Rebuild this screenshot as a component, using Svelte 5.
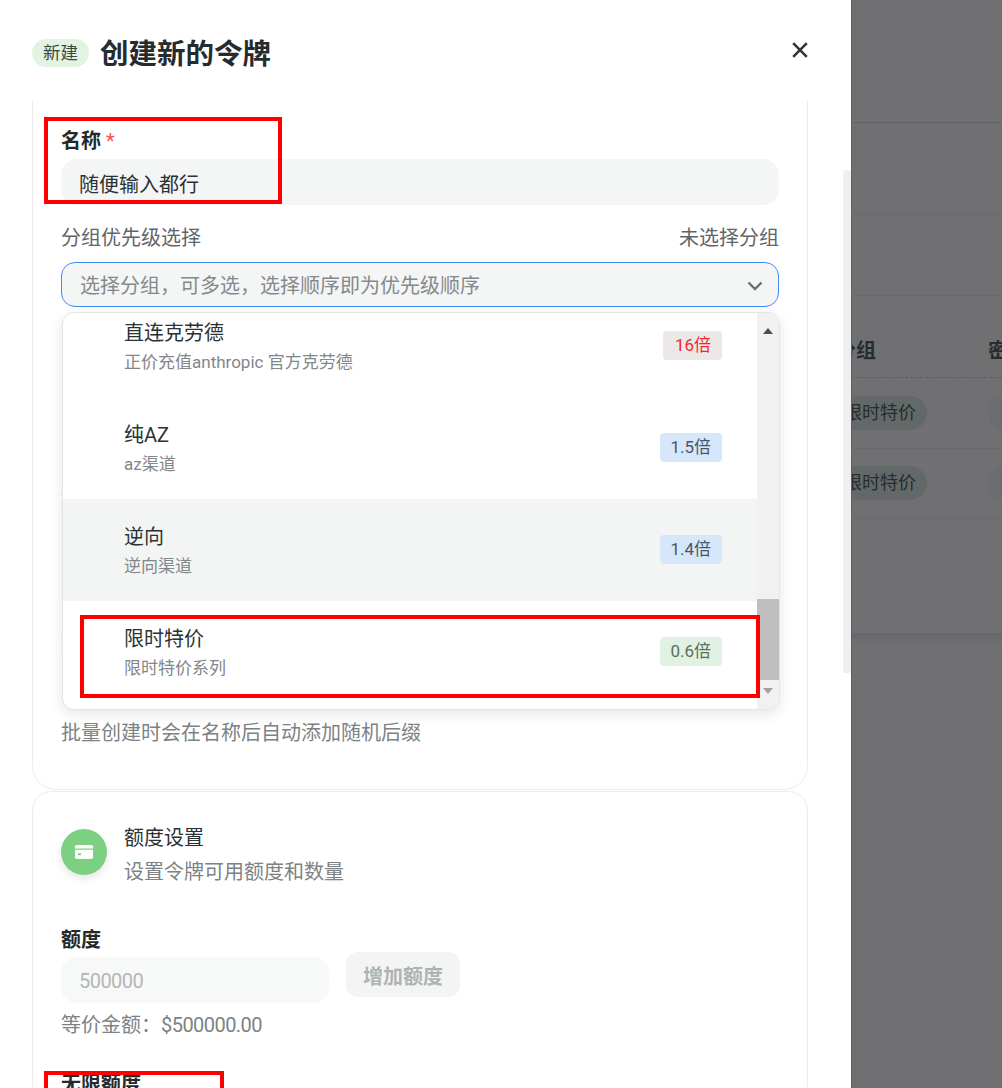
<script>
  const options = [
    { name: "直连克劳德", desc: "正价充值anthropic 官方克劳德", rate: "16倍", tone: "red" },
    { name: "纯AZ", desc: "az渠道", rate: "1.5倍", tone: "blue" },
    { name: "逆向", desc: "逆向渠道", rate: "1.4倍", tone: "blue", hover: true },
    { name: "限时特价", desc: "限时特价系列", rate: "0.6倍", tone: "green" },
  ];
</script>

<div class="page">
  <div class="bg-line first"></div>
  <div class="bg-line dotted tall"></div>
  <div class="bg-line dotted mid"></div>
  <div class="bg-head">
    <span>分组</span>
    <span>密钥</span>
  </div>
  {#each [0, 1] as row (row)}
    <div class="bg-row">
      <span class="chip">限时特价</span>
      <span class="chip ghost"></span>
    </div>
  {/each}
  <div class="bg-empty"></div>
  <div class="bg-band"></div>
</div>

<aside class="drawer">
  <header class="drawer-head">
    <span class="tag">新建</span>
    <h1>创建新的令牌</h1>
    <button class="close" aria-label="关闭">
      <svg viewBox="0 0 16 16" width="16" height="16">
        <path d="M1.2 1.2 14.8 14.8M14.8 1.2 1.2 14.8" stroke="#2f3638" stroke-width="2.6" fill="none" />
      </svg>
    </button>
  </header>

  <div class="scroll-thumb"></div>

  <div class="drawer-body">
    <section class="card top">
      <div class="label">名称 <em>*</em></div>
      <div class="input name">随便输入都行</div>

      <div class="label-row">
        <span>分组优先级选择</span>
        <span>未选择分组</span>
      </div>
      <div class="input select">
        <span>选择分组，可多选，选择顺序即为优先级顺序</span>
        <svg viewBox="0 0 16 10" width="16" height="10">
          <path d="M1.5 1.5 8 8l6.5-6.5" stroke="#6b7072" stroke-width="2.4" fill="none" />
        </svg>
      </div>

      <div class="under">
        <div class="under-label one">过期时间</div>
        <div class="under-label two">数量</div>
      </div>
      <p class="hint">批量创建时会在名称后自动添加随机后缀</p>

      <div class="dropdown">
        <div class="opt-list">
          {#each options as o (o.name)}
            <div class="opt" class:hover={o.hover}>
              <div class="opt-text">
                <div class="opt-name">{o.name}</div>
                <div class="opt-desc">{o.desc}</div>
              </div>
              <span class="rate {o.tone}">{o.rate}</span>
            </div>
          {/each}
        </div>
        <div class="bar">
          <svg class="arrow" viewBox="0 0 10 6" width="10" height="6"><path d="M5 0 10 6H0z" fill="#4b4f51" /></svg>
          <div class="thumb"></div>
          <svg class="arrow" viewBox="0 0 10 6" width="10" height="6"><path d="M0 0H10L5 6z" fill="#a3a3a3" /></svg>
        </div>
      </div>
    </section>

    <section class="card">
      <div class="card-head">
        <div class="icon">
          <svg viewBox="0 0 18 14" width="18" height="14">
            <path d="M2 0h14a2 2 0 0 1 2 2v1.4H0V2a2 2 0 0 1 2-2z" fill="#fff" />
            <path d="M0 4.8h18V12a2 2 0 0 1-2 2H2a2 2 0 0 1-2-2zM3 8.2v2h3v-2z" fill="#fff" fill-rule="evenodd" />
          </svg>
        </div>
        <div>
          <div class="card-title">额度设置</div>
          <div class="card-sub">设置令牌可用额度和数量</div>
        </div>
      </div>

      <div class="label quota-label">额度</div>
      <div class="quota-row">
        <div class="input quota"><span class="num">500000</span></div>
        <button class="add">增加额度</button>
      </div>
      <div class="equiv">等价金额：<span class="num">$500000.00</span></div>
      <div class="label unlimited">无限额度</div>
    </section>
  </div>

  <div class="mark mark-name"></div>
  <div class="mark mark-option"></div>
  <div class="mark mark-unlimited"></div>
</aside>

<style>
  :global(body) {
    margin: 0;
    background: #707072;
  }
  :global(html), :global(body) {
    height: 1088px;
    overflow: hidden;
  }
  :global(#app) {
    position: relative;
    width: 1002px;
    height: 1088px;
    overflow: hidden;
    font-family: Roboto, "Noto Sans CJK SC", sans-serif;
    font-size: 20px;
    color: #2c3234;
  }

  /* dimmed page behind the drawer */
  .page {
    height: 1088px;
    background: #707072;
    color: #272c2e;
    display: flex;
    flex-direction: column;
    padding-left: 836px;
    box-sizing: border-box;
  }
  .bg-line {
    border-bottom: 1px solid #5f6466;
  }
  .first {
    height: 122px;
  }
  .dotted {
    border-bottom: 1px dotted #5f6466;
  }
  .tall {
    height: 91px;
  }
  .mid {
    height: 80px;
  }
  .bg-head {
    height: 82px;
    display: flex;
    align-items: flex-end;
    gap: 112px;
    padding-bottom: 12px;
    box-sizing: border-box;
    font-weight: 700;
    line-height: 28px;
    white-space: nowrap;
    border-bottom: 1px dashed #5a5f61;
  }
  .bg-row {
    height: 70.5px;
    display: flex;
    align-items: center;
    gap: 61px;
    box-sizing: border-box;
    border-bottom: 1px dotted #5f6466;
    font-size: 18px;
  }
  .chip {
    background: #636869;
    border-radius: 18px;
    padding-right: 11px;
    width: 80px;
    height: 34px;
    line-height: 34px;
    white-space: nowrap;
    text-align: right;
    flex: none;
  }
  .ghost {
    width: 60px;
    padding: 0;
    background: #696d6f;
  }
  .bg-empty {
    height: 114px;
    border-bottom: 1px solid #65696b;
  }
  .bg-band {
    height: 12px;
    background: linear-gradient(#65696b, #707072);
  }

  /* drawer */
  .drawer {
    position: absolute;
    left: 0;
    top: 0;
    width: 852px;
    height: 1088px;
    background: #fff;
    border-right: 1px solid #5d6365;
    box-sizing: border-box;
    overflow: hidden;
  }
  .drawer-head {
    height: 100px;
    display: flex;
    align-items: center;
    padding: 0 43px 0 32px;
    box-sizing: border-box;
    gap: 11px;
  }
  .tag {
    background: #e3f3e2;
    color: #3c4a40;
    font-size: 17.5px;
    line-height: 28px;
    padding: 0 11px;
    border-radius: 14px;
    margin-top: 6px;
  }
  h1 {
    margin: 10px 0 0;
    font-size: 28.5px;
    line-height: 40px;
    font-weight: 700;
    flex: 1;
    color: #262c2e;
  }
  .close {
    border: 0;
    background: none;
    padding: 0;
    width: 16px;
    height: 16px;
    margin-top: -1px;
    line-height: 0;
  }
  .scroll-thumb {
    position: absolute;
    left: 843px;
    top: 170px;
    width: 8px;
    height: 503px;
    background: #efefef;
    border-radius: 2px;
  }
  .drawer-body {
    padding: 0 43px 0 32px;
    display: flex;
    flex-direction: column;
    gap: 1px;
  }
  .card {
    border: 1px solid #ededed;
    border-radius: 20px;
    padding: 0 28px;
    position: relative;
  }
  .card.top {
    border-top: 0;
    border-radius: 0 0 24px 24px;
    height: 690px;
    box-sizing: border-box;
    padding-top: 27px;
  }
  .label {
    font-weight: 700;
    line-height: 28px;
    margin-bottom: 4px;
    color: #24292b;
  }
  .label em {
    color: #f5534a;
    font-style: normal;
    font-weight: 400;
  }
  .input {
    background: #f4f5f5;
    border-radius: 16px;
    height: 46px;
    line-height: 46px;
    padding: 0 18px;
    width: 718px;
    box-sizing: border-box;
  }
  .name {
    line-height: 52px;
  }
  .label-row {
    display: flex;
    justify-content: space-between;
    width: 718px;
    color: #5f6567;
    line-height: 28px;
    margin: 19px 0 10px;
  }
  .select {
    display: flex;
    justify-content: space-between;
    align-items: center;
    border: 1px solid #3f8ef7;
    border-radius: 14px;
    height: 45px;
    color: #85898b;
    padding: 2px 15px 0 18px;
  }
  .under {
    height: 412px;
    width: 718px;
    display: flex;
    flex-direction: column;
    justify-content: flex-end;
    padding-top: 180px;
    box-sizing: border-box;
    gap: 120px;
    color: #24292b;
    line-height: 28px;
  }
  .two {
    margin-bottom: 60px;
  }
  .hint {
    margin: 0;
    color: #7d8284;
    line-height: 28px;
  }

  /* open select list */
  .dropdown {
    position: absolute;
    left: 29px;
    top: 212px;
    width: 718px;
    height: 398px;
    background: #fff;
    border: 1px solid #e8e4e6;
    border-radius: 12px;
    box-shadow: 0 4px 14px rgba(0, 0, 0, 0.1);
    box-sizing: border-box;
    display: flex;
    overflow: hidden;
  }
  .opt-list {
    flex: 1;
    padding-top: 2px;
    margin-top: -20px;
  }
  .opt {
    height: 102px;
    display: flex;
    justify-content: space-between;
    align-items: center;
    padding: 0 35px 0 61px;
    box-sizing: border-box;
  }
  .opt.hover {
    background: #f3f5f5;
  }
  .opt-name {
    line-height: 28px;
  }
  .opt-desc {
    font-size: 17px;
    line-height: 24px;
    color: #82878a;
    margin-top: 3px;
  }
  .rate {
    font-size: 17px;
    line-height: 29px;
    padding: 0 11px 0 10px;
    border-radius: 4px;
    text-align: center;
    margin-top: -2px;
  }
  .red {
    background: #ede8e8;
    color: #f02a2a;
    padding-left: 12px;
  }
  .blue {
    background: #d6e6fb;
    color: #4a5663;
  }
  .green {
    background: #e2f2e2;
    color: #55705a;
  }
  .bar {
    width: 22px;
    background: #f1f1f1;
    display: flex;
    flex-direction: column;
    justify-content: space-between;
    align-items: center;
    padding-top: 15px;
    box-sizing: border-box;
    position: relative;
  }
  .thumb {
    position: absolute;
    left: 0;
    right: 0;
    top: 286px;
    height: 81px;
    background: #bfbfc0;
  }
  .bar .arrow:last-child {
    margin-bottom: 15px;
  }

  /* second card */
  .card-head {
    display: flex;
    gap: 17px;
    padding-top: 26px;
    align-items: flex-start;
  }
  .icon {
    width: 46px;
    height: 46px;
    border-radius: 50%;
    background: #7dd081;
    box-shadow: 0 4px 8px rgba(0, 0, 0, 0.1);
    display: flex;
    align-items: center;
    justify-content: center;
    margin-top: 11px;
    flex: none;
  }
  .card-title {
    line-height: 28px;
    margin-top: 6px;
  }
  .card-sub {
    color: #7d8284;
    line-height: 28px;
    margin-top: 6px;
  }
  .quota-label {
    margin-top: 40px;
    margin-bottom: 3px;
  }
  .quota-row {
    display: flex;
    align-items: flex-start;
    gap: 17px;
    margin-top: -5px;
  }
  .quota {
    width: 268px;
    background: #f7f8f8;
    color: #b4b6b7;
    margin-top: 5px;
    line-height: 48px;
  }
  .num {
    letter-spacing: -0.55px;
  }
  .add {
    width: 114px;
    height: 45px;
    border: 0;
    border-radius: 12px;
    background: #f3f5f5;
    color: #b0b3b4;
    font: 700 20px/39px Roboto, "Noto Sans CJK SC", sans-serif;
    padding: 6px 0 0;
  }
  .equiv {
    color: #7d8284;
    line-height: 28px;
    margin-top: 8px;
  }
  .unlimited {
    margin-top: 31px;
  }

  /* red annotation boxes drawn on the screenshot */
  .mark {
    position: absolute;
    border: 4px solid #ff0000;
    box-sizing: border-box;
    pointer-events: none;
  }
  .mark-name {
    left: 44px;
    top: 117px;
    width: 238px;
    height: 87px;
  }
  .mark-option {
    left: 80px;
    top: 615px;
    width: 680px;
    height: 83px;
  }
  .mark-unlimited {
    left: 44px;
    top: 1071px;
    width: 180px;
    height: 40px;
  }
</style>
